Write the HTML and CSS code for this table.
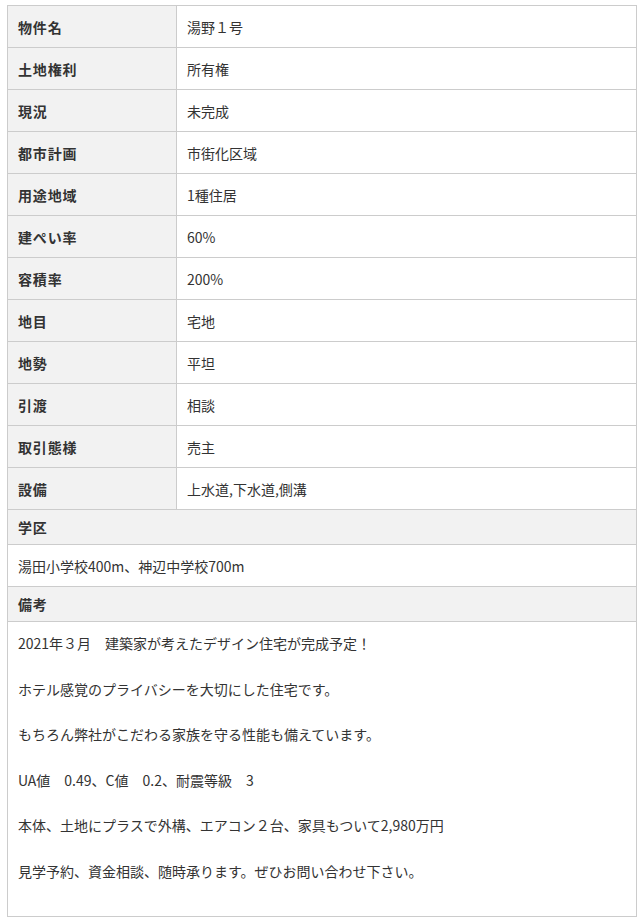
FILE: index.html
```html
<!DOCTYPE html>
<html lang="ja">
<head>
<meta charset="utf-8">
<link rel="stylesheet" href="styles.css">
</head>
<body>
<div class="wrap">
<table class="spec">
<tr><th>物件名</th><td>湯野１号</td></tr>
<tr><th>土地権利</th><td>所有権</td></tr>
<tr><th>現況</th><td>未完成</td></tr>
<tr><th>都市計画</th><td>市街化区域</td></tr>
<tr><th>用途地域</th><td>1種住居</td></tr>
<tr><th>建ぺい率</th><td>60%</td></tr>
<tr><th>容積率</th><td>200%</td></tr>
<tr><th>地目</th><td>宅地</td></tr>
<tr><th>地勢</th><td>平坦</td></tr>
<tr><th>引渡</th><td>相談</td></tr>
<tr><th>取引態様</th><td>売主</td></tr>
<tr><th>設備</th><td>上水道,下水道,側溝</td></tr>
<tr><th colspan="2" class="head">学区</th></tr>
<tr><td colspan="2" class="full">湯田小学校400m、神辺中学校700m</td></tr>
<tr><th colspan="2" class="head">備考</th></tr>
<tr><td colspan="2" class="note">2021年３月　建築家が考えたデザイン住宅が完成予定！<br><br>ホテル感覚のプライバシーを大切にした住宅です。<br><br>もちろん弊社がこだわる家族を守る性能も備えています。<br><br>UA値　0.49、C値　0.2、耐震等級　3<br><br>本体、土地にプラスで外構、エアコン２台、家具もついて2,980万円<br><br>見学予約、資金相談、随時承ります。ぜひお問い合わせ下さい。<br><br></td></tr>
</table>
</div>
</body>
</html>
```
FILE: styles.css
```css
html, body {
  margin: 0;
  padding: 0;
  background: #fff;
}
.wrap {
  padding: 5px 0 0 7px;
}
.spec {
  border-collapse: collapse;
  width: 630px;
  table-layout: fixed;
  font-family: "Noto Sans CJK JP", "Noto Sans", sans-serif;
  font-size: 14px;
  color: #333;
}
.spec th, .spec td {
  border: 1px solid #ccc;
  padding: 0 10px;
  text-align: left;
  vertical-align: middle;
  height: 42px;
  box-sizing: border-box;
  line-height: 22px;
}
.spec th {
  width: 169px;
  background: #f2f2f2;
  font-weight: bold;
  letter-spacing: 0.06em;
}
.spec td {
  font-weight: normal;
}
.spec th.head {
  width: auto;
  height: 35px;
}
.spec td.full {
  height: 42px;
}
.spec td.note {
  vertical-align: top;
  padding: 10px 10px 11px;
  line-height: 22.75px;
  height: auto;
}
```
